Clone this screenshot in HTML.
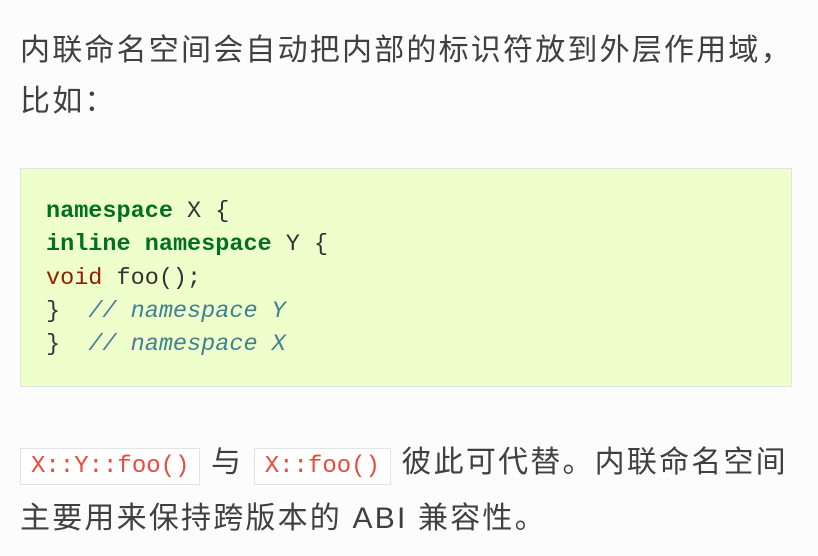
<!DOCTYPE html>
<html><head><meta charset="utf-8"><style>
body{margin:0;background:#fcfcfc;width:818px;height:556px;overflow:hidden;font-family:"Liberation Sans","Noto Sans CJK SC",sans-serif;color:#404040}
p{position:absolute;left:20px;margin:0;font-size:30px;letter-spacing:2.2px;line-height:51px}
pre{position:absolute;left:20px;top:168px;width:772px;height:219px;margin:0;background:#eeffcc;border:1px solid #e1e4e5;box-sizing:border-box;padding:26px 0 0 25px;font-family:"Liberation Mono",monospace;font-size:23.5px;line-height:33.3px;color:#333}
.k{color:#007020;font-weight:bold}.t{color:#902000}.c{color:#408090;font-style:italic}
code{font-family:"Liberation Mono",monospace;font-size:24px;color:#e74c3c;background:#fff;border:1px solid #e1e4e5;padding:4px 10px;letter-spacing:0;}
</style></head><body>
<p style="top:25px">内联命名空间会自动把内部的标识符放到外层作用域，<br>比如：</p>
<pre><span class="k">namespace</span> X {
<span class="k">inline</span> <span class="k">namespace</span> Y {
<span class="t">void</span> foo();
}  <span class="c">// namespace Y</span>
}  <span class="c">// namespace X</span></pre>
<p style="top:437px;line-height:52px"><code>X::Y::foo()</code> 与 <code>X::foo()</code> 彼此可代替。内联命名空间<br>主要用来保持跨版本的 ABI 兼容性。</p>
</body></html>
